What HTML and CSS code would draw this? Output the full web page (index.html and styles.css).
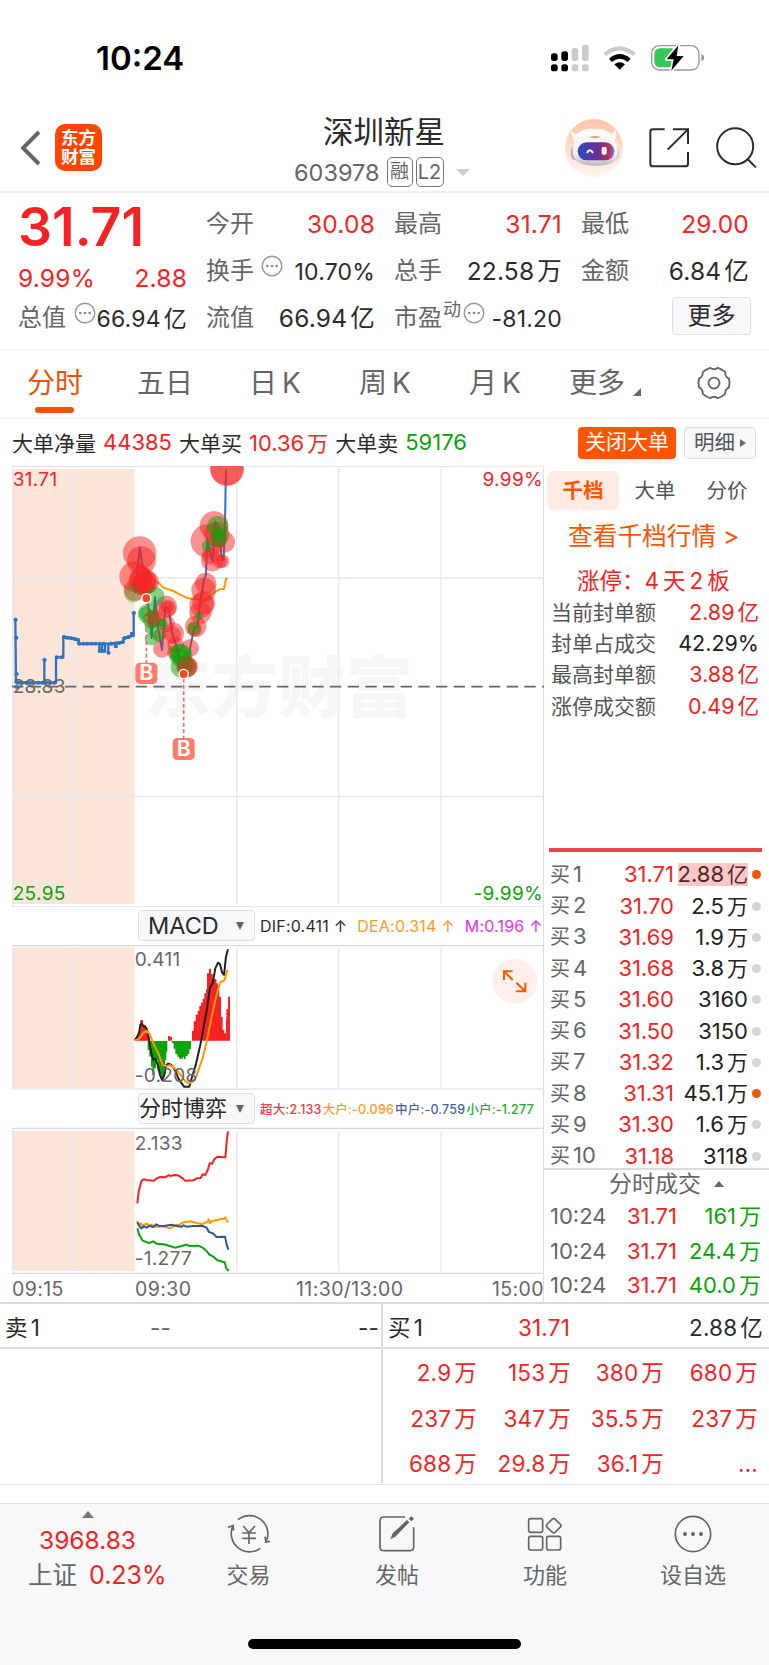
FILE: index.html
```html
<!DOCTYPE html>
<html lang="zh-CN">
<head>
	<meta charset="utf-8">
	<title>深圳新星 603978</title>
	<link rel="stylesheet" href="styles.css">
</head>
<body>
	<div class="statusbar">
		<span class="clock">10:24</span>
		<svg class="signals" viewBox="0 0 462 84">
			<g fill="#000">
				<rect x="3" y="28" width="20" height="23" rx="8"/><rect x="34" y="22" width="20" height="29" rx="8"/>
				<rect x="3" y="61" width="20" height="21" rx="8"/><rect x="34" y="61" width="20" height="21" rx="8"/>
			</g>
			<g fill="#cbcbcb">
				<rect x="65" y="12" width="20" height="39" rx="8"/><rect x="96" y="2" width="20" height="49" rx="8"/>
				<rect x="65" y="61" width="20" height="21" rx="8"/><rect x="96" y="61" width="20" height="21" rx="8"/>
			</g>
			<path d="M160 27Q209-14 258 27L250 36Q209 3 168 36Z" fill="#cbcbcb"/>
			<path d="M177 44Q209 16 242 44L233 54Q209 35 186 54Z"/>
			<path d="M193 61Q209 48 225 61L209 77Z"/>
			<rect x="305" y="5" width="142" height="73" rx="23" fill="none" stroke="#999" stroke-width="4"/>
			<path d="M454 30Q463 34 463 41Q463 48 454 52Z" fill="#999"/>
			<path d="M331 13H368V70H331Q313 70 313 52V31Q313 13 331 13Z" fill="#34c759"/>
			<path d="M385 4L350 46H371L364 80L401 36H380Z" stroke="#fff" stroke-width="10" stroke-linejoin="round"/>
			<path d="M385 4L350 46H371L364 80L401 36H380Z"/>
		</svg>
	</div>

	<div class="header">
		<div class="left">
			<svg class="back" viewBox="0 0 20 36"><path d="M18 2L2 18L18 34" fill="none" stroke="#666" stroke-width="4"/></svg>
			<div class="logo">东方<br>财富</div>
		</div>
		<div class="title">
			<div class="name">深圳新星</div>
			<div class="code">603978 <span class="badge">融</span><span class="badge l2">L2</span><i class="caret"></i></div>
		</div>
		<div class="right">
			<svg class="robot" viewBox="0 0 174 174">
				<defs>
					<linearGradient id="peach" x1="0" y1="0" x2="0" y2="1"><stop offset="0" stop-color="#ffc5a8"/><stop offset="1" stop-color="#fff6f2"/></linearGradient>
					<linearGradient id="visor" x1="0" y1="0" x2="1" y2="0"><stop offset="0" stop-color="#2b4cc0"/><stop offset=".55" stop-color="#6a2c98"/><stop offset=".85" stop-color="#b82d62"/><stop offset="1" stop-color="#6a7fe0"/></linearGradient>
					<linearGradient id="shell" x1="0" y1="0" x2="0" y2="1"><stop offset="0" stop-color="#fff"/><stop offset=".7" stop-color="#f1eeee"/><stop offset="1" stop-color="#b9b5b8"/></linearGradient>
				</defs>
				<circle cx="87" cy="87" r="87" fill="url(#peach)"/>
				<ellipse cx="30" cy="102" rx="13" ry="22" fill="#b4b0b5"/><ellipse cx="150" cy="102" rx="13" ry="22" fill="#d0ccd0"/>
				<path d="M17 31Q21 45 36 44Q60 27 90 30Q118 28 137 45Q146 44 150 31Q159 46 149 63Q160 82 159 105Q154 130 130 136Q92 146 54 136Q29 129 24 105Q21 85 30 67Q18 52 17 31Z" fill="url(#shell)"/>
				<path d="M72 55Q90 47 108 55Q90 60 72 55Z" fill="#e9a25b"/>
				<rect x="38" y="70" width="110" height="54" rx="27" fill="url(#visor)"/>
				<path d="M66 102Q74 86 84 102" fill="none" stroke="#fff" stroke-width="6"/>
				<rect x="110" y="84" width="15" height="23" rx="5" fill="#fff"/>
			</svg>
			<svg class="share" viewBox="0 0 120 120"><path d="M47 4H12Q4 4 4 12V107Q4 115 12 115H109Q117 115 117 107V72M72 4H117V48M117 4L56 65" fill="none" stroke="#2c2c2c" stroke-width="6"/></svg>
			<svg class="search" viewBox="0 0 122 126"><circle cx="57" cy="58" r="54" fill="none" stroke="#2c2c2c" stroke-width="6"/><path d="M94 96L119 121" stroke="#2c2c2c" stroke-width="6"/></svg>
		</div>
	</div>

	<div class="quote">
		<div class="main">
			<div class="price">31.71</div>
			<div class="pair red"><span>9.99%</span><span>2.88</span></div>
			<div class="pair"><label>总值</label><svg class="tip" viewBox="0 0 22 22"><use href="#dots"/></svg><b class="small">66.94<em>亿</em></b></div>
		</div>
		<div class="stats">
			<div class="pair"><label>今开</label><b class="red">30.08</b></div>
			<div class="pair"><label>最高</label><b class="red">31.71</b></div>
			<div class="pair"><label>最低</label><b class="red">29.00</b></div>
			<div class="pair"><label>换手</label><svg class="tip" viewBox="0 0 22 22"><g id="dots"><circle cx="11" cy="11" r="9.8" fill="none" stroke="#999" stroke-width="1.4"/><g fill="#888"><circle cx="6.3" cy="11" r="1.3"/><circle cx="11" cy="11" r="1.3"/><circle cx="15.7" cy="11" r="1.3"/></g></g></svg><b class="small">10.70%</b></div>
			<div class="pair"><label>总手</label><b>22.58<em>万</em></b></div>
			<div class="pair"><label>金额</label><b>6.84<em>亿</em></b></div>
			<div class="pair"><label>流值</label><b>66.94<em>亿</em></b></div>
			<div class="pair"><label>市盈<sup>动</sup></label><svg class="tip pe" viewBox="0 0 22 22"><use href="#dots"/></svg><b class="small">-81.20</b></div>
			<div class="more">更多</div>
		</div>
	</div>

	<div class="tabs">
		<div class="tab active">分时</div>
		<div class="tab">五日</div>
		<div class="tab">日<s></s>K</div>
		<div class="tab">周<s></s>K</div>
		<div class="tab">月<s></s>K</div>
		<div class="tab">更多<i class="corner"></i></div>
		<div class="tab"><svg class="gear" viewBox="-50 -50 100 100"><g fill="none" stroke="#666" stroke-width="5.5" stroke-linejoin="round"><path d="M44.2-12.7Q47 0 44.2 12.7Q32 18.5 33.1 32Q23.5 40.7 11.1 44.6Q0 36-11.1 44.6Q-23.5 40.7-33.1 32Q-32 18.5-44.2 12.7Q-47 0-44.2-12.7Q-32-18.5-33.1-32Q-23.5-40.7-11.1-44.6Q0-36 11.1-44.6Q23.5-40.7 33.1-32Q32-18.5 44.2-12.7Z"/><circle r="16"/></g></svg></div>
	</div>

	<div class="bigorder">
		<span>大单净量</span><span class="red num">44385</span>
		<span>大单买</span><span class="red num">10.36<em>万</em></span>
		<span>大单卖</span><span class="green num">59176</span>
		<div class="btn-close">关闭大单</div>
		<div class="btn-detail">明细<i></i></div>
	</div>

	<div class="board">
		<div class="charts">
			<!-- price -->
			<svg class="plot plot-price" viewBox="36 18 1596 1323">
				<rect x="36" y="27" width="368" height="1305" fill="#fce6da"/>
				<text class="watermark" x="432" y="756">东方财富</text>
				<g class="grid"><path d="M36 20H1632M36 354H1632M36 1010H1632M36 1340H1632M37.500 20V1340"/><path d="M218 27V1332M710 27V1332M1016 27V1332M1323 27V1332"/></g>
				<path class="zero" d="M36 680H1632"/>
				<g class="line blue">
					<path stroke-width="7" d="M46 478L48 668H168V592H190V530L235 538V551H325L370 546V534L396 528H401V458M133 668V598M298 553V577M306 553V578M315 553V577M325 553V581M347 551V562M394 516V530"/>
					<path class="knobs" d="M46 479h1M48 533h1M49 642h1M49 680h1M54 668h1M66 668h1M78 668h1M90 668h1M102 668h1M114 668h1M126 668h1M138 668h1M150 668h1M162 668h1M133 600h1M170 592h1M185 592h1M192 531h1M202 533h1M213 535h1M224 537h1M234 540h1M238 551h1M250 551h1M262 551h1M274 551h1M286 551h1M298 551h1M310 551h1M333 551h1M345 551h1M357 549h1M368 546h1M374 534h1M385 531h1M396 521h1M401 459h1M299 573h1M312 573h1M325 578h1M347 559h1"/>
					<path d="M405 400L419 262L426 310L432 360L440 400L449 470L455 534L465 412L472 490L486 570L496 441L507 448L517 520L530 560L545 618L552 645L567 605L571 560L583 502H592L600 430L612 360L618 345L622 235L629 275L638 304L645 185L655 200L666 300L671 300L675 190L677 70L679 28"/>
				</g>
				<path class="line orange" d="M405 312L430 320L445 335L463 362L478 370L490 383L520 393L545 406L565 415L585 418L600 422L614 420L625 412L637 400L652 392L661 387H672L674 377L678 357L683 354"/>
				<g class="red-dots">
					<circle cx="681" cy="28" r="50"/><circle cx="681" cy="26" r="50"/>
					<circle cx="419" cy="279" r="50"/><circle cx="424" cy="302" r="43"/><circle cx="404" cy="350" r="46"/><circle cx="428" cy="364" r="42"/><circle cx="423" cy="355" r="34"/><circle cx="432" cy="370" r="37"/><circle cx="404" cy="390" r="33"/><circle cx="431" cy="374" r="26"/><circle cx="443" cy="367" r="34"/>
					<circle cx="462" cy="476" r="28"/><circle cx="498" cy="440" r="33"/><circle cx="502" cy="446" r="26"/><circle cx="501" cy="442" r="19"/><circle cx="500" cy="492" r="25"/><circle cx="486" cy="566" r="27"/><circle cx="480" cy="524" r="20"/><circle cx="520" cy="520" r="32"/><circle cx="518" cy="524" r="25"/><circle cx="527" cy="555" r="25"/><circle cx="523" cy="578" r="21"/>
					<circle cx="561" cy="620" r="32"/><circle cx="556" cy="611" r="26"/><circle cx="570" cy="564" r="27"/><circle cx="587" cy="499" r="32"/><circle cx="584" cy="507" r="22"/><circle cx="601" cy="458" r="33"/><circle cx="605" cy="435" r="37"/><circle cx="611" cy="428" r="34"/><circle cx="611" cy="390" r="37"/><circle cx="617" cy="370" r="32"/>
					<circle cx="637" cy="300" r="34"/><circle cx="632" cy="287" r="27"/><circle cx="660" cy="304" r="21"/><circle cx="668" cy="304" r="20"/><circle cx="622" cy="243" r="50"/><circle cx="642" cy="197" r="43"/><circle cx="650" cy="223" r="38"/><circle cx="673" cy="246" r="32"/><circle cx="653" cy="240" r="24"/>
				</g>
				<g class="green-dots">
					<circle cx="400" cy="400" r="28" fill-opacity=".3"/><circle cx="465" cy="410" r="29"/><circle cx="443" cy="462" r="30"/><circle cx="455" cy="480" r="27"/><circle cx="437" cy="460" r="20"/><circle cx="454" cy="503" r="20"/><circle cx="453" cy="537" r="19"/><circle cx="484" cy="492" r="18"/><circle cx="488" cy="490" r="12"/><circle cx="476" cy="528" r="18"/><circle cx="538" cy="580" r="30"/><circle cx="543" cy="587" r="34"/><circle cx="545" cy="592" r="26"/><circle cx="544" cy="621" r="32"/><circle cx="560" cy="622" r="30"/><circle cx="582" cy="504" r="20"/><circle cx="597" cy="468" r="13"/><circle cx="653" cy="200" r="32"/><circle cx="655" cy="225" r="24"/><circle cx="659" cy="238" r="24"/><circle cx="622" cy="257" r="17"/>
				</g>
				<!-- reds that came after the greens -->
				<g class="red-dots">
					<circle cx="431" cy="368" r="32"/><circle cx="462" cy="476" r="22"/><circle cx="561" cy="620" r="30"/>
				</g>
				<g class="marks">
					<path d="M439 430V610M551 656V836"/>
					<circle cx="439" cy="415" r="14"/><circle cx="551" cy="642" r="14"/>
					<rect x="406" y="608" width="66" height="64" rx="14"/><rect x="518" y="834" width="66" height="66" rx="14"/>
					<text x="439" y="661" text-anchor="middle">B</text><text x="551" y="888" text-anchor="middle">B</text>
				</g>
				<g class="scale">
					<text x="38" y="77" class="red">31.71</text>
					<text x="1629" y="77" class="red" text-anchor="end">9.99%</text>
					<text x="38" y="698">28.83</text>
					<text x="38" y="1319" class="green">25.95</text>
					<text x="1629" y="1319" class="green" text-anchor="end">-9.99%</text>
				</g>
			</svg>
			<div class="legend macd">
				<div class="select">MACD<i></i></div>
				<span class="c-dark">DIF:0.411 ↑</span><span class="c-orange">DEA:0.314 ↑</span><span class="c-pink">M:0.196 ↑</span>
			</div>
			<!-- macd -->
			<svg class="plot plot-macd" viewBox="36 342 1596 438">
				<rect x="36" y="352" width="368" height="422" fill="#fce6da"/>
				<g class="grid"><path class="strong" d="M36 347H1632"/><path d="M36 777H1632M37.500 346V777M218 352V774M710 352V774M1016 352V774M1323 352V774"/></g>
				<path fill="#f52323" d="M404 632V628H410V618H416V600H421V570H429V584H437V592H442V604H447V632ZM504 632V618H511V621H516V632ZM576 632V602H581V574H587V554H593V542H598V528H603V518H608V506H613V490H618V478H621V430H627V416H633V432H638V448H644V447H649V460H654V480H658V500H663V560H668V600H673V610H678V570H679V537H684V500H690V632Z"/>
				<path fill="#0aa30a" d="M443 633V660H448V680H453V710H457V735H463V715H468V690H473V722H479V735H484V752H490V735H495V690H499V665H502V633ZM516 633V640H521V656H526V672H532V680H537V686H549V682H552V687H557V678H563V672H568V658H573V633Z"/>
				<path class="line dark" d="M404 630L412 620L418 605L421 584L425 580L430 589L436 590L443 605L447 628L454 670L460 690L466 686L473 705L480 735L486 750L493 735L498 706L505 701L513 704L520 712L527 725L535 745L545 760L552 770H568L575 745L588 702L602 640L612 585L622 530L630 472L638 460L646 415L654 398L660 402L666 427L672 435L678 380L684 358"/>
				<path class="line orange" d="M404 630L412 629L418 625L430 608L440 603L449 612L460 640L475 670L488 705L500 708L512 706L528 718L542 735L556 754L568 760L578 754L588 742L597 715L608 685L620 635L632 575L646 510L654 480L661 457L674 450L680 425L684 420"/>
				<g class="scale"><text x="404" y="409">0.411</text><text x="404" y="756">-0.208</text></g>
				<g class="expand"><circle cx="1544" cy="454" r="67"/><path d="M1512 450V424H1538M1513 425L1538 450M1576 458V484H1548M1575 483L1549 458"/></g>
			</svg>
			<div class="legend boyi">
				<div class="select">分时博弈<i></i></div>
				<span class="c-red">超大:2.133</span><span class="c-orange">大户:-0.096</span><span class="c-blue">中户:-0.759</span><span class="c-green">小户:-1.277</span>
			</div>
			<!-- big/small player flow -->
			<svg class="plot plot-boyi" viewBox="36 171 1596 444">
				<rect x="36" y="182" width="368" height="421" fill="#fce6da"/>
				<g class="grid"><path class="strong" d="M36 175H1632M36 610H1632"/><path d="M37.500 175V610M218 182V603M710 182V603M1016 182V603M1323 182V603"/></g>
				<path class="line" stroke="#f52323" d="M412 400L416 365L421 345L425 332L431 328L440 330L462 332L470 325L480 321L495 322L505 316L515 318L520 315L535 316L548 325L555 332L580 331L590 325L602 324L608 313L616 315L624 298L629 280L636 281L643 268L652 260L676 262L680 215L684 184"/>
				<path class="line orange" d="M412 453L416 465L422 460L427 467L440 461L448 467L455 464L463 471L480 469L495 471L510 474L520 470L528 465L538 464L550 457L570 454L588 458L605 463L615 458L622 456L626 448L630 459L638 452L652 450L663 447H671L676 442L684 458"/>
				<path class="line" stroke="#2f5597" d="M412 457L418 468L424 475L432 469L440 473L449 467L458 471L469 463L478 468L495 467L515 464L530 468L545 470L550 466L560 470L580 468H608L620 473L627 486L638 490L650 501L675 500L680 524L685 539"/>
				<path class="line" stroke="#0aa30a" d="M412 475L418 495L427 511L436 515L447 519L460 514L470 521L490 523L510 528L525 533L545 528L558 524L570 528L595 527L608 533L620 543L628 554L640 560L652 571L674 577L679 595L686 603"/>
				<g class="scale"><text x="404" y="240">2.133</text><text x="404" y="585">-1.277</text></g>
			</svg>
			<div class="axis"><span>09:15</span><span>09:30</span><span>11:30/13:00</span><span>15:00</span></div>
		</div>

		<div class="side">
			<div class="sidetabs"><span class="active">千档</span><span>大单</span><span>分价</span></div>
			<div class="link">查看千档行情 &gt;</div>
			<div class="limit">涨停：4<em>天</em>2<em>板</em></div>
			<div class="kv"><span>当前封单额</span><b class="red">2.89<em>亿</em></b></div>
			<div class="kv"><span>封单占成交</span><b>42.29%</b></div>
			<div class="kv"><span>最高封单额</span><b class="red">3.88<em>亿</em></b></div>
			<div class="kv"><span>涨停成交额</span><b class="red">0.49<em>亿</em></b></div>
			<div class="redline"></div>
			<div class="bids">
				<div class="bid hot"><span>买<em>1</em></span><b class="red">31.71</b><b class="flash">2.88<em>亿</em></b><i></i></div>
				<div class="bid"><span>买<em>2</em></span><b class="red">31.70</b><b>2.5<em>万</em></b><i></i></div>
				<div class="bid"><span>买<em>3</em></span><b class="red">31.69</b><b>1.9<em>万</em></b><i></i></div>
				<div class="bid"><span>买<em>4</em></span><b class="red">31.68</b><b>3.8<em>万</em></b><i></i></div>
				<div class="bid"><span>买<em>5</em></span><b class="red">31.60</b><b>3160</b><i></i></div>
				<div class="bid"><span>买<em>6</em></span><b class="red">31.50</b><b>3150</b><i></i></div>
				<div class="bid"><span>买<em>7</em></span><b class="red">31.32</b><b>1.3<em>万</em></b><i></i></div>
				<div class="bid hot"><span>买<em>8</em></span><b class="red">31.31</b><b>45.1<em>万</em></b><i></i></div>
				<div class="bid"><span>买<em>9</em></span><b class="red">31.30</b><b>1.6<em>万</em></b><i></i></div>
				<div class="bid"><span>买<em>10</em></span><b class="red">31.18</b><b>3118</b><i></i></div>
			</div>
			<div class="deals">
				<div class="deals-title">分时成交<i></i></div>
				<div class="deal"><span>10:24</span><b class="red">31.71</b><b class="green">161<em>万</em></b></div>
				<div class="deal"><span>10:24</span><b class="red">31.71</b><b class="green">24.4<em>万</em></b></div>
				<div class="deal"><span>10:24</span><b class="red">31.71</b><b class="green">40.0<em>万</em></b></div>
			</div>
		</div>
	</div>

	<div class="queue">
		<div class="sell">
			<div class="qhead"><span>卖<em>1</em></span><span class="mid">--</span><span>--</span></div>
		</div>
		<div class="buy">
			<div class="qhead"><span>买<em>1</em></span><span class="red">31.71</span><span>2.88<em>亿</em></span></div>
			<div class="qgrid">
				<span>2.9<em>万</em></span><span>153<em>万</em></span><span>380<em>万</em></span><span>680<em>万</em></span>
				<span>237<em>万</em></span><span>347<em>万</em></span><span>35.5<em>万</em></span><span>237<em>万</em></span>
				<span>688<em>万</em></span><span>29.8<em>万</em></span><span>36.1<em>万</em></span><span>...</span>
			</div>
		</div>
	</div>

	<div class="bottombar">
		<div class="nav">
			<div class="index">
				<i></i>
				<div class="red point">3968.83</div>
				<div class="idx">上证<span class="red">0.23%</span></div>
			</div>
			<div class="item">
				<svg viewBox="-66 -60 132 120"><g fill="none" stroke="#666" stroke-width="5"><path d="M-33-43A55 55 0 0 1 51 24L63 22M51 24L48 8M34 43A55 55 0 0 1-48-25L-63-20M-48-25L-46-10"/><path d="M-17-24L0-4L18-24M0-4V30M-20-3H21M-20 13H21"/></g></svg>
				<span>交易</span>
			</div>
			<div class="item">
				<svg viewBox="-66 -60 132 120"><path d="M24-51H-39Q-51-51-51-39V38Q-51 50-39 50H38Q50 50 50 38V-20" fill="none" stroke="#666" stroke-width="5"/><path d="M-20 16L-13-2L30-42L37-35L-5 8ZM35-46L43-53L51-46L43-38Z" fill="#666"/></svg>
				<span>发帖</span>
			</div>
			<div class="item">
				<svg viewBox="-66 -60 132 120"><g fill="none" stroke="#666" stroke-width="5"><rect x="-49" y="-46" width="42" height="41" rx="6"/><rect x="-49" y="7" width="42" height="41" rx="6"/><rect x="5" y="7" width="42" height="41" rx="6"/><rect x="9" y="-42" width="34" height="34" rx="6" transform="rotate(45 26 -25)"/></g></svg>
				<span>功能</span>
			</div>
			<div class="item">
				<svg viewBox="-66 -60 132 120"><circle r="53" fill="none" stroke="#666" stroke-width="5"/><g fill="#666"><circle cx="-24" r="6"/><circle r="6"/><circle cx="24" r="6"/></g></svg>
				<span>设自选</span>
			</div>
		</div>
		<div class="home"></div>
	</div>
</body>
</html>
```
FILE: styles.css
```css
* {
	box-sizing: border-box;
}
body {
	margin: 0;
	width: 769px;
	background: #fff;
	color: #2b2b2b;
	font-family: Inter, "Noto Sans CJK SC", sans-serif;
	font-size: 21px;
	font-weight: 400;
	white-space: nowrap;
	text-autospace: no-autospace;
}
b {
	font-weight: 400;
}
em {
	font-style: normal;
	margin-left: 3px;
}
.red {
	color: #f52323;
}
.green {
	color: #0aa30a;
}

/* status bar */
.statusbar {
	height: 104px;
	padding: 12px 65px 0 96px;
	display: flex;
	align-items: center;
	justify-content: space-between;
}
.clock {
	font-size: 33px;
	font-weight: 600;
	color: #000;
	line-height: 40px;
}
.signals {
	width: 154px;
	height: 28px;
	margin-top: -1px;
}

/* header */
.header {
	height: 89px;
	display: grid;
	grid-template-columns: 285px 200px 284px;
	border-bottom: 2px solid #eee;
}
.header .left {
	display: flex;
	align-items: center;
	padding: 0 0 0 21px;
}
.back {
	width: 20px;
	height: 36px;
}
.logo {
	width: 47px;
	height: 47px;
	margin: -1px 0 0 14px;
	padding-top: 4px;
	border-radius: 10px;
	background: #ff4600;
	color: #fff;
	font-size: 17.500px;
	font-weight: 700;
	line-height: 19.500px;
	text-align: center;
}
.title {
	padding-top: 8px;
}
.title .name {
	line-height: 40px;
	font-size: 30.500px;
	text-align: center;
	padding-right: 2px;
}
.title .code {
	display: flex;
	align-items: center;
	height: 36px;
	margin-top: 2px;
	padding-left: 9px;
	color: #666;
	font-size: 23.500px;
}
.badge {
	border: 1px solid #777;
	border-radius: 5px;
	width: 26px;
	height: 30px;
	line-height: 28px;
	margin-left: 7px;
	font-size: 19px;
	text-align: center;
}
.badge.l2 {
	width: 28px;
	margin-left: 3px;
	font-size: 20px;
}
.caret {
	margin-left: 12px;
	border: 7px solid transparent;
	border-top-color: #ccc;
	border-bottom: 0;
}
.header .right {
	display: flex;
	align-items: center;
	padding-left: 80px;
}
.robot {
	width: 58px;
	height: 58px;
}
.share {
	width: 40px;
	height: 40px;
	margin-left: 26px;
}
.search {
	width: 41px;
	height: 42px;
	margin-left: 27px;
}

/* quote */
.quote {
	height: 157px;
	display: flex;
	gap: 19px;
	padding: 0 0 0 18px;
	border-bottom: 1px solid #eee;
}
.main {
	width: 169px;
}
.price {
	height: 65px;
	line-height: 67px;
	font-size: 53.500px;
	font-weight: 600;
	color: #f52323;
}
.pair {
	display: flex;
	align-items: center;
	justify-content: space-between;
	font-size: 24px;
	height: 40px;
	line-height: 40px;
}
.pair b, .pair span {
	font-size: 24.500px;
	letter-spacing: .2px;
}
.pair label {
	color: #666;
}
.pair .small {
	font-size: 23px;
	padding-top: 2px;
}
.tip {
	width: 22px;
	height: 22px;
	margin: -10px auto 0 7px;
}
.tip.pe {
	margin-left: 2px;
}
.main .tip {
	margin-right: 0;
}
.pair sup {
	font-size: 18px;
	line-height: 0;
	position: relative;
	top: -1px;
	margin-left: 1px;
}
.stats {
	display: grid;
	grid-template-columns: 169px 168px 168px;
	grid-template-rows: 47px 47px 47px;
	column-gap: 19px;
	padding-top: 7px;
	align-items: center;
}
.more {
	justify-self: end;
	width: 79px;
	height: 38px;
	margin: -4px -2px 0 0;
	line-height: 35px;
	border: 1px solid #dcdfe6;
	border-radius: 4px;
	background: #f7f8fa;
	font-size: 24px;
	text-align: center;
}

/* period tabs */
.tabs {
	height: 69px;
	display: grid;
	grid-template-columns: repeat(7, 110px);
	border-bottom: 2px solid #f5f5f5;
	font-size: 28px;
	line-height: 67px;
	color: #666;
	text-align: center;
}
.tab s {
	padding-left: 5px;
}
.tab.active {
	color: #e95504;
	position: relative;
}
.tab.active:after {
	content: "";
	position: absolute;
	left: 35px;
	bottom: 4px;
	width: 39px;
	height: 6px;
	border-radius: 3px;
	background: #e95504;
}
.corner {
	display: inline-block;
	margin: 0 0 -3px 8px;
	border: 4px solid #666;
	border-top-color: transparent;
	border-left-color: transparent;
}
.gear {
	width: 34px;
	height: 34px;
	vertical-align: middle;
	margin: -4px 3px 0 0;
}

/* big order summary */
.bigorder {
	height: 47px;
	display: flex;
	align-items: center;
	padding: 0 13px 0 12px;
	font-size: 21px;
}
.bigorder span {
	padding-bottom: 2px;
}
.bigorder .num {
	margin: 0 7px 0 7px;
	font-size: 22px;
}
.bigorder em {
	font-size: 21px;
}
.btn-close {
	margin-left: auto;
	width: 98px;
	height: 32px;
	line-height: 30px;
	border-radius: 4px;
	background: #ff5400;
	color: #fff;
	text-align: center;
}
.btn-detail {
	margin-left: 8px;
	width: 72px;
	height: 32px;
	line-height: 30px;
	border: 1px solid #dcdfe6;
	border-radius: 4px;
	background: #f7f8fa;
	color: #555;
	font-size: 20.500px;
	text-align: center;
}
.btn-detail i {
	display: inline-block;
	margin: 0 0 3px 5px;
	border: 4px solid transparent;
	border-left: 6px solid #666;
	border-right: 0;
}

/* charts */
.board {
	display: flex;
	height: 838px;
	border-bottom: 2px solid #dadbe2;
}
.charts {
	width: 544px;
	padding-left: 12px;
	border-right: 1px solid #dcdfe6;
}
.plot {
	display: block;
	width: 532px;
}
.plot-price {
	height: 441px;
}
.plot-macd {
	height: 146px;
}
.plot-boyi {
	height: 148px;
}
.grid path {
	fill: none;
	stroke: #e4e8ef;
	stroke-width: 4;
}
.grid .strong {
	stroke: #d5d9e0;
}
.zero {
	stroke: #666;
	stroke-width: 5;
	stroke-dasharray: 34 19;
}
.watermark {
	font-size: 200px;
	font-weight: 900;
	letter-spacing: 2px;
	fill: #f6f6f6;
}
.line {
	fill: none;
	stroke-width: 6;
	stroke-linejoin: round;
}
.blue {
	stroke: #2f74c4;
}
.orange {
	stroke: #ff9800;
}
.dark {
	stroke: #222;
}
.knobs {
	stroke-width: 12;
	stroke-linecap: round;
}
.green-dots {
	fill: #0aa30a;
	fill-opacity: .5;
}
.red-dots {
	fill: #f52323;
	fill-opacity: .5;
}
.marks path {
	stroke: #f76a5c;
	stroke-width: 5;
	stroke-dasharray: 11 8;
}
.marks circle {
	fill: #ef4a2c;
	stroke: #fff;
	stroke-width: 4;
}
.marks rect {
	fill: #ff7b6d;
}
.marks text {
	fill: #fff;
	font-size: 64px;
	font-weight: 600;
}
.scale text {
	font-size: 57px;
	letter-spacing: 1px;
	fill: #666;
}
.scale .red {
	fill: #f52323;
}
.scale .green {
	fill: #0aa30a;
}
.expand circle {
	fill: #fdf0ea;
}
.expand path {
	fill: none;
	stroke: #f25c05;
	stroke-width: 6;
}
.legend {
	height: 37px;
	display: flex;
	align-items: center;
	padding-left: 126px;
	font-size: 16px;
	letter-spacing: .2px;
}
.legend span + span {
	margin-left: 10px;
}
.select {
	width: 117px;
	height: 31px;
	margin-right: 5px;
	border: 1px solid #dcdfe6;
	border-radius: 4px;
	background: #f7f8fa;
	display: flex;
	align-items: center;
	justify-content: space-between;
	padding: 0 10px 0 9px;
	font-size: 23.500px;
	line-height: 31px;
	letter-spacing: 0;
}
.select i {
	border: 4.500px solid transparent;
	border-top: 8px solid #666;
	border-bottom: 0;
}
.legend.boyi {
	font-size: 12.500px;
	font-weight: 500;
}
.boyi .select {
	padding-left: 0;
	font-size: 22px;
	font-weight: 400;
}
.legend.boyi span + span {
	margin-left: 1px;
}
.c-orange {
	color: #ff9b1a;
}
.c-pink {
	color: #e62ee6;
}
.c-red {
	color: #f5383c;
}
.c-blue {
	color: #4466a5;
}
.c-green {
	color: #25ab25;
}
.axis {
	display: grid;
	grid-template-columns: 123px 161px 147px 101px;
	line-height: 29px;
	font-size: 19.500px;
	letter-spacing: .4px;
	color: #666;
}
.axis span:last-child {
	text-align: right;
}

/* right column */
.side {
	width: 225px;
	color: #555;
}
.sidetabs {
	display: grid;
	grid-template-columns: repeat(3, 72px);
	padding: 5px 0 0 3px;
	line-height: 39px;
	height: 44px;
	font-size: 20.500px;
	text-align: center;
}
.sidetabs .active {
	height: 39px;
	border-radius: 6px;
	background: #feece4;
	color: #ff5400;
	font-weight: 600;
}
.link {
	height: 53px;
	line-height: 53px;
	padding-left: 24px;
	font-size: 24.700px;
	color: #ff5400;
}
.limit {
	height: 34px;
	line-height: 35px;
	padding-left: 33px;
	font-size: 22.500px;
	color: #f52323;
}
.limit em {
	margin: 0 4px;
}
.kv {
	display: flex;
	justify-content: space-between;
	height: 31.200px;
	line-height: 31px;
	padding: 0 10px 0 7px;
	font-size: 21px;
}
.kv b {
	font-size: 21.500px;
}
.kv b:not(.red), .bid b:not(.red) {
	color: #222;
}
.redline {
	height: 4px;
	margin: 126px 7px 7px 5px;
	background: #ee4648;
}
.bid {
	display: grid;
	grid-template-columns: 42px 82px 74px 12px;
	align-items: center;
	height: 31.280px;
	line-height: 31px;
	padding-left: 6px;
	font-size: 21px;
}
.bid b {
	text-align: right;
	font-size: 22px;
}
.bid b em {
	font-size: 21px;
}
.bid span {
	color: #666;
	font-size: 20px;
}
.bid span em {
	font-size: 22px;
}
.bid i {
	width: 9px;
	height: 9px;
	margin-left: 4px;
	border-radius: 50%;
	background: #d3d6dd;
}
.bid.hot i {
	background: #f25500;
}
.bid .flash {
	justify-self: end;
	height: 23px;
	line-height: 23px;
	background: #fbc8c8;
}
.bid .flash:not(.red) {
	color: #54272a;
}
.deals {
	border-top: 2px solid #dadbe2;
	margin-top: -3px;
}
.deals-title {
	height: 30px;
	line-height: 29px;
	padding-left: 65px;
	font-size: 23px;
	color: #666;
}
.deals-title i {
	display: inline-block;
	margin: 0 0 5px 13px;
	border: 5px solid transparent;
	border-bottom: 6px solid #666;
	border-top: 0;
}
.deal {
	display: grid;
	grid-template-columns: 56px 71px 84px;
	height: 34.500px;
	line-height: 33px;
	padding-left: 6px;
	font-size: 22px;
}
.deal span {
	color: #666;
}
.deal b {
	text-align: right;
}

/* order queue */
.queue {
	display: flex;
	height: 181px;
	border-bottom: 1px solid #e3e3e8;
	font-size: 22.500px;
	letter-spacing: .2px;
}
.sell {
	width: 383px;
	border-right: 2px solid #dadbe2;
	height: 179px;
}
.buy {
	width: 386px;
}
.qhead {
	display: grid;
	grid-template-columns: 65px 117px 1fr;
	height: 45px;
	line-height: 48px;
	padding: 0 6px 0 5px;
	border-bottom: 2px solid #dadbe2;
}
.sell .qhead {
	padding-right: 2px;
}
.qhead span + span {
	text-align: right;
}
.qhead .mid {
	color: #666;
	padding-right: 16px;
}
.qgrid {
	display: grid;
	grid-template-columns: 94px 94px 93px 94px;
	grid-auto-rows: 45.500px;
	line-height: 45px;
	color: #f52323;
	text-align: right;
	padding-top: 1px;
}

/* bottom bar */
.bottombar {
	height: 162px;
	margin-top: 18px;
	background: #f7f8fa;
	border-top: 1px solid #dcdfe3;
}
.nav {
	display: grid;
	grid-template-columns: 174px 149px 148px 148px 148px;
	height: 135px;
	color: #666;
}
.index {
	padding: 7px 0 0 28px;
	font-size: 24.500px;
}
.index i {
	display: block;
	width: 0;
	margin-left: 54px;
	border: 6px solid transparent;
	border-bottom: 7px solid #777;
	border-top: 0;
}
.point {
	line-height: 35px;
	margin: 5px 0 0 11px;
}
.idx span {
	margin-left: 12px;
	font-size: 25px;
}
.idx {
	line-height: 34px;
}
.item {
	display: flex;
	flex-direction: column;
	align-items: center;
	padding-top: 10px;
	font-size: 22px;
	line-height: 32px;
}
.item svg {
	width: 44px;
	height: 40px;
	margin-bottom: 5px;
}
.home {
	width: 273px;
	height: 10px;
	margin: 0 auto;
	border-radius: 5px;
	background: #000;
}
```
